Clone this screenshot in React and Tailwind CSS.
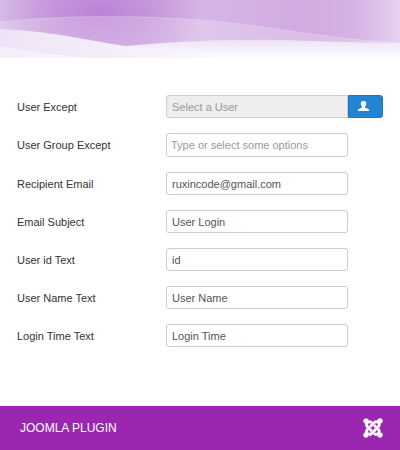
import React from "react";
import { FaJoomla } from "react-icons/fa";

const fields = [
  { id: "recipient", label: "Recipient Email", value: "ruxincode@gmail.com", type: "email" },
  { id: "subject", label: "Email Subject", value: "User Login", type: "text" },
  { id: "userid", label: "User id Text", value: "id", type: "text" },
  { id: "username", label: "User Name Text", value: "User Name", type: "text" },
  { id: "logintime", label: "Login Time Text", value: "Login Time", type: "text" },
];

function Banner() {
  return (
    <svg className="block w-full h-[58px]" viewBox="0 0 400 58" preserveAspectRatio="none" aria-hidden="true">
      <defs>
        <linearGradient id="base" x1="0" x2="1" y1="0" y2="0">
          <stop offset="0" stopColor="#d6bce6" />
          <stop offset="0.15" stopColor="#cb9fde" />
          <stop offset="0.35" stopColor="#cb9fde" />
          <stop offset="0.5" stopColor="#d6b6e6" />
          <stop offset="0.75" stopColor="#d1abe1" />
          <stop offset="0.88" stopColor="#d4b1e4" />
          <stop offset="1" stopColor="#e6d2f0" />
        </linearGradient>
        <radialGradient id="glow" gradientUnits="userSpaceOnUse" cx="0" cy="0" r="1" gradientTransform="translate(100 14) scale(100 60)">
          <stop offset="0" stopColor="#b97fd4" stopOpacity="0.9" />
          <stop offset="0.5" stopColor="#bd86d6" stopOpacity="0.45" />
          <stop offset="1" stopColor="#bd86d6" stopOpacity="0" />
        </radialGradient>
        <linearGradient id="mist" x1="0" x2="0" y1="0" y2="1">
          <stop offset="0" stopColor="#eee2f6" />
          <stop offset="1" stopColor="#fefdff" />
        </linearGradient>
        <linearGradient id="veil" x1="0" x2="1" y1="0" y2="0">
          <stop offset="0" stopColor="#eee3f6" />
          <stop offset="1" stopColor="#fbf8fd" />
        </linearGradient>
      </defs>
      <rect width="400" height="58" fill="url(#base)" />
      <rect width="400" height="58" fill="url(#glow)" />
      <path d="M0 22 C60 15 140 15 200 20 C260 24 310 37 400 43 V58 H0 Z" fill="#fff" fillOpacity="0.22" />
      <path d="M0 22 C60 15 140 15 200 20 C260 24 310 37 400 43" fill="none" stroke="#fff" strokeOpacity="0.2" />
      <path d="M110 48 C160 42 220 39 280 40 C330 41 365 43 400 43 V58 H110 Z" fill="url(#mist)" />
      <path d="M0 29 C50 31 85 40 125 46 C150 49 180 53 225 58 H0 Z" fill="url(#veil)" />
      <path d="M0 46 C30 52 60 55 90 58 H0 Z" fill="#fff" fillOpacity="0.4" />
    </svg>
  );
}

function Row({ id, label, children }) {
  return (
    <div className="flex items-center">
      <label htmlFor={id} className="w-[149px] shrink-0 text-[#333]">{label}</label>
      {children}
    </div>
  );
}

function App() {
  return (
    <div className="min-h-screen flex flex-col bg-white font-['Liberation_Sans',Arial,sans-serif]">
      <header>
        <Banner />
      </header>

      {/* Plugin settings */}
      <form className="flex flex-col gap-[15px] pt-[37px] pb-8 px-[17px] text-[11px] leading-4" onSubmit={(e) => e.preventDefault()}>
        <Row id="except" label="User Except">
          <input
            id="except"
            type="text"
            readOnly
            placeholder="Select a User"
            className="h-[23px] min-w-0 flex-1 rounded-l-[3px] border border-[#ccc] bg-[#eee] px-[5px] placeholder:text-[#999]"
          />
          <button type="button" aria-label="Select a User" className="flex h-[23px] w-[35px] shrink-0 items-center justify-center rounded-r-[3px] border border-[#1f79c2] bg-[#2384d3] pr-1 pb-0.5 text-white">
            <svg className="h-[10px] w-[11px]" viewBox="0 0 11 10" fill="currentColor">
              <path d="M5.500 0 C7.600 0 8.300 1.100 8.200 2.900 C8.100 4.200 7.600 5 7 5.600 V6.400 C8 7.200 10.500 7.400 10.800 8.600 L11 10 H0 L0.200 8.600 C0.500 7.400 3 7.200 4 6.400 V5.600 C3.400 5 2.900 4.200 2.800 2.900 C2.700 1.100 3.400 0 5.500 0 Z" />
            </svg>
          </button>
        </Row>

        <Row id="group" label="User Group Except">
          <input
            id="group"
            type="text"
            placeholder="Type or select some options"
            className="mr-[35px] h-6 min-w-0 flex-1 rounded-[3px] border border-[#ccc] px-1 placeholder:text-[#999]"
          />
        </Row>

        {fields.map((field) => (
          <Row key={field.id} id={field.id} label={field.label}>
            <input
              id={field.id}
              type={field.type}
              defaultValue={field.value}
              className="mr-[35px] h-[23px] min-w-0 flex-1 rounded-[3px] border border-[#ccc] px-[5px] text-[#555]"
            />
          </Row>
        ))}
      </form>

      <footer className="mt-auto flex h-11 items-center justify-between bg-[#9b26af] pl-5 pr-4 text-white">
        <span className="text-xs">JOOMLA PLUGIN</span>
        <FaJoomla className="h-[22px] w-[22px] overflow-visible stroke-white stroke-[6px]" />
      </footer>
    </div>
  );
}

export default App;
